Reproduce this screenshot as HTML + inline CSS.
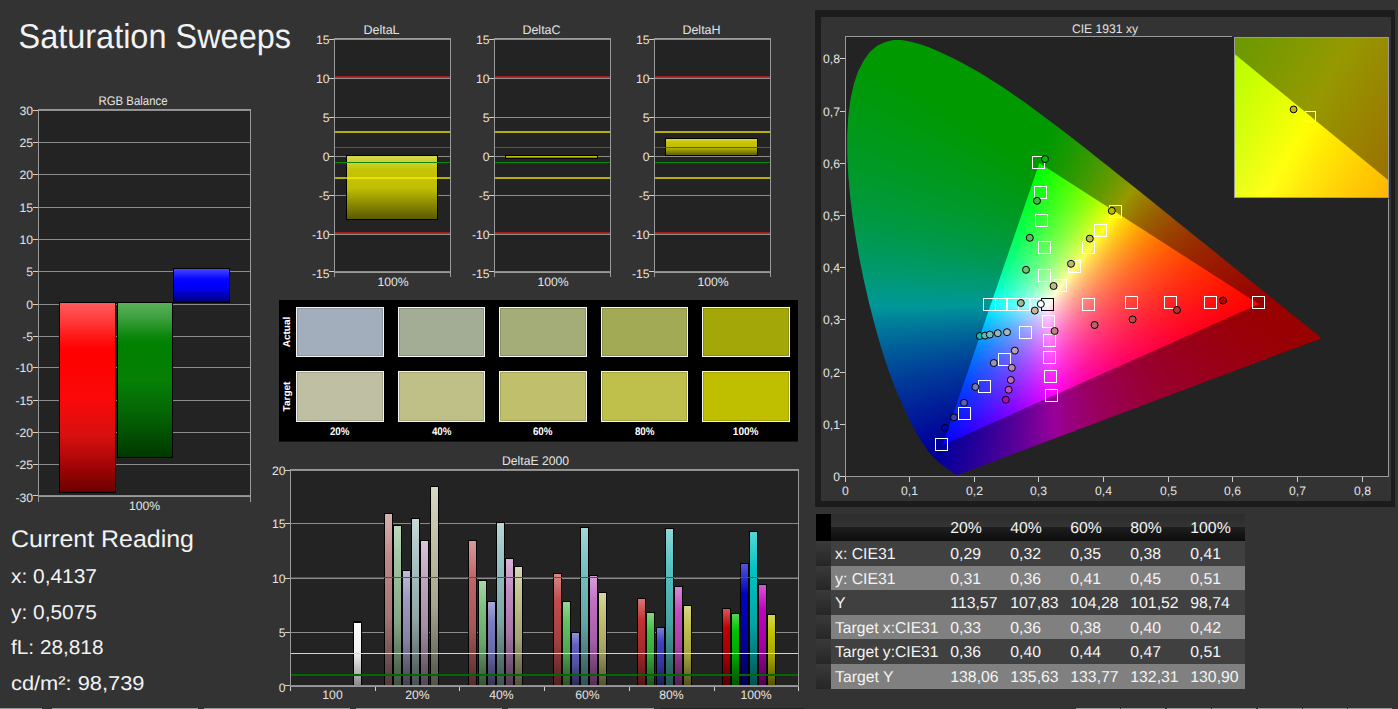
<!DOCTYPE html>
<html><head><meta charset="utf-8"><title>Saturation Sweeps</title>
<style>
html,body{margin:0;padding:0;background:#333333;}
#pg{position:relative;width:1398px;height:709px;overflow:hidden;background:#333333;font-family:"Liberation Sans", sans-serif;}
#pg svg{position:absolute;left:0;top:0;}
text{font-family:"Liberation Sans", sans-serif;}
</style></head><body><div id="pg">
<svg width="1398" height="709" viewBox="0 0 1398 709" shape-rendering="crispEdges" text-rendering="geometricPrecision"><defs><linearGradient id="gr" x1="0" y1="0" x2="0" y2="1"><stop offset="0" stop-color="#ff5c5c"/><stop offset=".08" stop-color="#ff4040"/><stop offset=".2" stop-color="#ff1010"/><stop offset=".25" stop-color="#ff0000"/><stop offset=".5" stop-color="#fb0808"/><stop offset=".7" stop-color="#d81010"/><stop offset=".87" stop-color="#a00404"/><stop offset="1" stop-color="#6a0000"/></linearGradient>
<linearGradient id="gg" x1="0" y1="0" x2="0" y2="1"><stop offset="0" stop-color="#5cb05c"/><stop offset=".1" stop-color="#3ca03c"/><stop offset=".22" stop-color="#0c860c"/><stop offset=".27" stop-color="#008000"/><stop offset=".5" stop-color="#068006"/><stop offset=".75" stop-color="#046004"/><stop offset="1" stop-color="#003800"/></linearGradient>
<linearGradient id="gb" x1="0" y1="0" x2="0" y2="1"><stop offset="0" stop-color="#4a4aff"/><stop offset=".3" stop-color="#0808ff"/><stop offset=".42" stop-color="#0000ff"/><stop offset=".6" stop-color="#0000ee"/><stop offset="1" stop-color="#000074"/></linearGradient>
<linearGradient id="gy" x1="0" y1="0" x2="0" y2="1"><stop offset="0" stop-color="#d8d850"/><stop offset=".1" stop-color="#d0d030"/><stop offset=".22" stop-color="#c5c506"/><stop offset=".5" stop-color="#c0c000"/><stop offset="1" stop-color="#585800"/></linearGradient>
<linearGradient id="bw" x1="0" y1="0" x2="0" y2="1"><stop offset="0" stop-color="#ffffff"/><stop offset=".5" stop-color="#f0f0f0"/><stop offset="1" stop-color="#8a8a8a"/></linearGradient>
<linearGradient id="b00" x1="0" y1="0" x2="0" y2="1"><stop offset="0" stop-color="#d7b2b2"/><stop offset=".25" stop-color="#c28888"/><stop offset=".6" stop-color="#a57474"/><stop offset="1" stop-color="#513939"/></linearGradient>
<linearGradient id="b01" x1="0" y1="0" x2="0" y2="1"><stop offset="0" stop-color="#bed7be"/><stop offset=".25" stop-color="#9bc29b"/><stop offset=".6" stop-color="#84a584"/><stop offset="1" stop-color="#415141"/></linearGradient>
<linearGradient id="b02" x1="0" y1="0" x2="0" y2="1"><stop offset="0" stop-color="#bebed7"/><stop offset=".25" stop-color="#9b9bc2"/><stop offset=".6" stop-color="#8484a5"/><stop offset="1" stop-color="#414151"/></linearGradient>
<linearGradient id="b03" x1="0" y1="0" x2="0" y2="1"><stop offset="0" stop-color="#c8d7d7"/><stop offset=".25" stop-color="#abc2c2"/><stop offset=".6" stop-color="#91a5a5"/><stop offset="1" stop-color="#485151"/></linearGradient>
<linearGradient id="b04" x1="0" y1="0" x2="0" y2="1"><stop offset="0" stop-color="#d7c5d7"/><stop offset=".25" stop-color="#c2a6c2"/><stop offset=".6" stop-color="#a58da5"/><stop offset="1" stop-color="#514651"/></linearGradient>
<linearGradient id="b05" x1="0" y1="0" x2="0" y2="1"><stop offset="0" stop-color="#d7d7c5"/><stop offset=".25" stop-color="#c2c2a6"/><stop offset=".6" stop-color="#a5a58d"/><stop offset="1" stop-color="#515146"/></linearGradient>
<linearGradient id="b10" x1="0" y1="0" x2="0" y2="1"><stop offset="0" stop-color="#d79c9c"/><stop offset=".25" stop-color="#c26666"/><stop offset=".6" stop-color="#a55757"/><stop offset="1" stop-color="#512b2b"/></linearGradient>
<linearGradient id="b11" x1="0" y1="0" x2="0" y2="1"><stop offset="0" stop-color="#aad7aa"/><stop offset=".25" stop-color="#7cc27c"/><stop offset=".6" stop-color="#69a569"/><stop offset="1" stop-color="#345134"/></linearGradient>
<linearGradient id="b12" x1="0" y1="0" x2="0" y2="1"><stop offset="0" stop-color="#aaaad7"/><stop offset=".25" stop-color="#7c7cc2"/><stop offset=".6" stop-color="#6969a5"/><stop offset="1" stop-color="#343451"/></linearGradient>
<linearGradient id="b13" x1="0" y1="0" x2="0" y2="1"><stop offset="0" stop-color="#b9d7d7"/><stop offset=".25" stop-color="#93c2c2"/><stop offset=".6" stop-color="#7da5a5"/><stop offset="1" stop-color="#3e5151"/></linearGradient>
<linearGradient id="b14" x1="0" y1="0" x2="0" y2="1"><stop offset="0" stop-color="#d7b4d7"/><stop offset=".25" stop-color="#c28bc2"/><stop offset=".6" stop-color="#a576a5"/><stop offset="1" stop-color="#513a51"/></linearGradient>
<linearGradient id="b15" x1="0" y1="0" x2="0" y2="1"><stop offset="0" stop-color="#d7d7b3"/><stop offset=".25" stop-color="#c2c28a"/><stop offset=".6" stop-color="#a5a575"/><stop offset="1" stop-color="#51513a"/></linearGradient>
<linearGradient id="b20" x1="0" y1="0" x2="0" y2="1"><stop offset="0" stop-color="#d78a8a"/><stop offset=".25" stop-color="#c24b4b"/><stop offset=".6" stop-color="#a54040"/><stop offset="1" stop-color="#512020"/></linearGradient>
<linearGradient id="b21" x1="0" y1="0" x2="0" y2="1"><stop offset="0" stop-color="#97d797"/><stop offset=".25" stop-color="#5fc25f"/><stop offset=".6" stop-color="#51a551"/><stop offset="1" stop-color="#285128"/></linearGradient>
<linearGradient id="b22" x1="0" y1="0" x2="0" y2="1"><stop offset="0" stop-color="#9797d7"/><stop offset=".25" stop-color="#5f5fc2"/><stop offset=".6" stop-color="#5151a5"/><stop offset="1" stop-color="#282851"/></linearGradient>
<linearGradient id="b23" x1="0" y1="0" x2="0" y2="1"><stop offset="0" stop-color="#a7d7d7"/><stop offset=".25" stop-color="#77c2c2"/><stop offset=".6" stop-color="#65a5a5"/><stop offset="1" stop-color="#325151"/></linearGradient>
<linearGradient id="b24" x1="0" y1="0" x2="0" y2="1"><stop offset="0" stop-color="#d7a1d7"/><stop offset=".25" stop-color="#c26ec2"/><stop offset=".6" stop-color="#a55ea5"/><stop offset="1" stop-color="#512e51"/></linearGradient>
<linearGradient id="b25" x1="0" y1="0" x2="0" y2="1"><stop offset="0" stop-color="#d7d7a1"/><stop offset=".25" stop-color="#c2c26e"/><stop offset=".6" stop-color="#a5a55e"/><stop offset="1" stop-color="#51512e"/></linearGradient>
<linearGradient id="b30" x1="0" y1="0" x2="0" y2="1"><stop offset="0" stop-color="#d77a7a"/><stop offset=".25" stop-color="#c23232"/><stop offset=".6" stop-color="#a52a2a"/><stop offset="1" stop-color="#511515"/></linearGradient>
<linearGradient id="b31" x1="0" y1="0" x2="0" y2="1"><stop offset="0" stop-color="#84d784"/><stop offset=".25" stop-color="#41c241"/><stop offset=".6" stop-color="#37a537"/><stop offset="1" stop-color="#1b511b"/></linearGradient>
<linearGradient id="b32" x1="0" y1="0" x2="0" y2="1"><stop offset="0" stop-color="#8484d7"/><stop offset=".25" stop-color="#4141c2"/><stop offset=".6" stop-color="#3737a5"/><stop offset="1" stop-color="#1b1b51"/></linearGradient>
<linearGradient id="b33" x1="0" y1="0" x2="0" y2="1"><stop offset="0" stop-color="#90d7d7"/><stop offset=".25" stop-color="#55c2c2"/><stop offset=".6" stop-color="#48a5a5"/><stop offset="1" stop-color="#245151"/></linearGradient>
<linearGradient id="b34" x1="0" y1="0" x2="0" y2="1"><stop offset="0" stop-color="#d78bd7"/><stop offset=".25" stop-color="#c24dc2"/><stop offset=".6" stop-color="#a541a5"/><stop offset="1" stop-color="#512051"/></linearGradient>
<linearGradient id="b35" x1="0" y1="0" x2="0" y2="1"><stop offset="0" stop-color="#d7d78b"/><stop offset=".25" stop-color="#c2c24d"/><stop offset=".6" stop-color="#a5a541"/><stop offset="1" stop-color="#515120"/></linearGradient>
<linearGradient id="b40" x1="0" y1="0" x2="0" y2="1"><stop offset="0" stop-color="#d75959"/><stop offset=".25" stop-color="#c20000"/><stop offset=".6" stop-color="#a50000"/><stop offset="1" stop-color="#510000"/></linearGradient>
<linearGradient id="b41" x1="0" y1="0" x2="0" y2="1"><stop offset="0" stop-color="#59d759"/><stop offset=".25" stop-color="#00c200"/><stop offset=".6" stop-color="#00a500"/><stop offset="1" stop-color="#005100"/></linearGradient>
<linearGradient id="b42" x1="0" y1="0" x2="0" y2="1"><stop offset="0" stop-color="#5959d7"/><stop offset=".25" stop-color="#0000c2"/><stop offset=".6" stop-color="#0000a5"/><stop offset="1" stop-color="#000051"/></linearGradient>
<linearGradient id="b43" x1="0" y1="0" x2="0" y2="1"><stop offset="0" stop-color="#59d7d7"/><stop offset=".25" stop-color="#00c2c2"/><stop offset=".6" stop-color="#00a5a5"/><stop offset="1" stop-color="#005151"/></linearGradient>
<linearGradient id="b44" x1="0" y1="0" x2="0" y2="1"><stop offset="0" stop-color="#d759d7"/><stop offset=".25" stop-color="#c200c2"/><stop offset=".6" stop-color="#a500a5"/><stop offset="1" stop-color="#510051"/></linearGradient>
<linearGradient id="b45" x1="0" y1="0" x2="0" y2="1"><stop offset="0" stop-color="#d7d759"/><stop offset=".25" stop-color="#c2c200"/><stop offset=".6" stop-color="#a5a500"/><stop offset="1" stop-color="#515100"/></linearGradient>
<linearGradient id="th" x1="0" y1="0" x2="0" y2="1"><stop offset="0" stop-color="#2c2c2c"/><stop offset=".5" stop-color="#343434"/><stop offset=".5" stop-color="#1e1e1e"/><stop offset="1" stop-color="#0c0c0c"/></linearGradient>
<linearGradient id="rh" x1="0" y1="0" x2="0" y2="1"><stop offset="0" stop-color="#3a3a3a"/><stop offset="1" stop-color="#262626"/></linearGradient></defs>
<text x="18.5" y="48.2" font-size="34.5" fill="#f2f2f2" textLength="272.5" lengthAdjust="spacingAndGlyphs">Saturation Sweeps</text>
<rect x="38" y="109" width="213" height="388" fill="#232323"/>
<rect x="38" y="110" width="212" height="1" fill="#8c8c8c"/>
<rect x="33" y="110" width="5" height="1" fill="#d0d0d0"/>
<text x="33" y="115.4" font-size="12.2" fill="#e4e4e4" text-anchor="end">30</text>
<rect x="38" y="142" width="212" height="1" fill="#8c8c8c"/>
<rect x="33" y="142" width="5" height="1" fill="#d0d0d0"/>
<text x="33" y="147.4" font-size="12.2" fill="#e4e4e4" text-anchor="end">25</text>
<rect x="38" y="174" width="212" height="1" fill="#8c8c8c"/>
<rect x="33" y="174" width="5" height="1" fill="#d0d0d0"/>
<text x="33" y="179.4" font-size="12.2" fill="#e4e4e4" text-anchor="end">20</text>
<rect x="38" y="207" width="212" height="1" fill="#8c8c8c"/>
<rect x="33" y="207" width="5" height="1" fill="#d0d0d0"/>
<text x="33" y="212.4" font-size="12.2" fill="#e4e4e4" text-anchor="end">15</text>
<rect x="38" y="239" width="212" height="1" fill="#8c8c8c"/>
<rect x="33" y="239" width="5" height="1" fill="#d0d0d0"/>
<text x="33" y="244.4" font-size="12.2" fill="#e4e4e4" text-anchor="end">10</text>
<rect x="38" y="271" width="212" height="1" fill="#8c8c8c"/>
<rect x="33" y="271" width="5" height="1" fill="#d0d0d0"/>
<text x="33" y="276.4" font-size="12.2" fill="#e4e4e4" text-anchor="end">5</text>
<rect x="38" y="304" width="212" height="1" fill="#8c8c8c"/>
<rect x="33" y="304" width="5" height="1" fill="#d0d0d0"/>
<text x="33" y="309.4" font-size="12.2" fill="#e4e4e4" text-anchor="end">0</text>
<rect x="38" y="336" width="212" height="1" fill="#8c8c8c"/>
<rect x="33" y="336" width="5" height="1" fill="#d0d0d0"/>
<text x="33" y="341.4" font-size="12.2" fill="#e4e4e4" text-anchor="end">-5</text>
<rect x="38" y="367" width="212" height="1" fill="#8c8c8c"/>
<rect x="33" y="367" width="5" height="1" fill="#d0d0d0"/>
<text x="33" y="372.4" font-size="12.2" fill="#e4e4e4" text-anchor="end">-10</text>
<rect x="38" y="400" width="212" height="1" fill="#8c8c8c"/>
<rect x="33" y="400" width="5" height="1" fill="#d0d0d0"/>
<text x="33" y="405.4" font-size="12.2" fill="#e4e4e4" text-anchor="end">-15</text>
<rect x="38" y="432" width="212" height="1" fill="#8c8c8c"/>
<rect x="33" y="432" width="5" height="1" fill="#d0d0d0"/>
<text x="33" y="437.4" font-size="12.2" fill="#e4e4e4" text-anchor="end">-20</text>
<rect x="38" y="464" width="212" height="1" fill="#8c8c8c"/>
<rect x="33" y="464" width="5" height="1" fill="#d0d0d0"/>
<text x="33" y="469.4" font-size="12.2" fill="#e4e4e4" text-anchor="end">-25</text>
<rect x="38" y="495" width="212" height="1" fill="#8c8c8c"/>
<rect x="33" y="495" width="5" height="1" fill="#d0d0d0"/>
<text x="33" y="502" font-size="12.2" fill="#e4e4e4" text-anchor="end">-30</text>
<rect x="38" y="109" width="213" height="1" fill="#9a9a9a"/>
<rect x="38" y="109" width="1" height="393" fill="#9a9a9a"/>
<rect x="250" y="109" width="1" height="393" fill="#9a9a9a"/>
<rect x="38" y="496" width="213" height="1" fill="#9a9a9a"/>
<text x="133" y="105" font-size="12.5" fill="#e4e4e4" text-anchor="middle" textLength="69" lengthAdjust="spacingAndGlyphs">RGB Balance</text>
<text x="144.5" y="510" font-size="12.2" fill="#e4e4e4" text-anchor="middle">100%</text>
<rect x="59.6" y="302.5" width="55.5" height="190" fill="url(#gr)" stroke="#000" stroke-width="1"/>
<rect x="117" y="302.5" width="55" height="155" fill="url(#gg)" stroke="#000" stroke-width="1"/>
<rect x="173.7" y="268.5" width="55.5" height="34" fill="url(#gb)" stroke="#000" stroke-width="1"/>
<text x="11" y="546.5" font-size="24" fill="#f2f2f2" textLength="183" lengthAdjust="spacingAndGlyphs">Current Reading</text>
<text x="11" y="583" font-size="20" fill="#f2f2f2" textLength="86" lengthAdjust="spacingAndGlyphs">x: 0,4137</text>
<text x="11" y="618.5" font-size="20" fill="#f2f2f2" textLength="86" lengthAdjust="spacingAndGlyphs">y: 0,5075</text>
<text x="11" y="653.7" font-size="20" fill="#f2f2f2" textLength="92.5" lengthAdjust="spacingAndGlyphs">fL: 28,818</text>
<text x="11" y="689.6" font-size="20" fill="#f2f2f2" textLength="133.5" lengthAdjust="spacingAndGlyphs">cd/m²: 98,739</text>
<rect x="334" y="39" width="117" height="233" fill="#232323"/>
<rect x="334" y="39" width="116" height="1" fill="#8c8c8c"/>
<rect x="329" y="39" width="5" height="1" fill="#d0d0d0"/>
<text x="329.5" y="44" font-size="12.2" fill="#e4e4e4" text-anchor="end">15</text>
<rect x="334" y="78" width="116" height="1" fill="#8c8c8c"/>
<rect x="329" y="78" width="5" height="1" fill="#d0d0d0"/>
<text x="329.5" y="83" font-size="12.2" fill="#e4e4e4" text-anchor="end">10</text>
<rect x="334" y="117" width="116" height="1" fill="#8c8c8c"/>
<rect x="329" y="117" width="5" height="1" fill="#d0d0d0"/>
<text x="329.5" y="122" font-size="12.2" fill="#e4e4e4" text-anchor="end">5</text>
<rect x="334" y="156" width="116" height="1" fill="#8c8c8c"/>
<rect x="329" y="156" width="5" height="1" fill="#d0d0d0"/>
<text x="329.5" y="161" font-size="12.2" fill="#e4e4e4" text-anchor="end">0</text>
<rect x="334" y="195" width="116" height="1" fill="#8c8c8c"/>
<rect x="329" y="195" width="5" height="1" fill="#d0d0d0"/>
<text x="329.5" y="200" font-size="12.2" fill="#e4e4e4" text-anchor="end">-5</text>
<rect x="334" y="234" width="116" height="1" fill="#8c8c8c"/>
<rect x="329" y="234" width="5" height="1" fill="#d0d0d0"/>
<text x="329.5" y="239" font-size="12.2" fill="#e4e4e4" text-anchor="end">-10</text>
<rect x="334" y="271" width="116" height="1" fill="#8c8c8c"/>
<rect x="329" y="271" width="5" height="1" fill="#d0d0d0"/>
<text x="329.5" y="278" font-size="12.2" fill="#e4e4e4" text-anchor="end">-15</text>
<rect x="334" y="38" width="117" height="1" fill="#9a9a9a"/>
<rect x="334" y="38" width="1" height="239" fill="#9a9a9a"/>
<rect x="450" y="38" width="1" height="239" fill="#9a9a9a"/>
<rect x="334" y="272" width="117" height="1" fill="#9a9a9a"/>
<rect x="346.5" y="155.5" width="91" height="64" fill="url(#gy)" stroke="#000" stroke-width="1"/>
<rect x="335" y="76.3" width="115" height="1.7" fill="#d81c1c" shape-rendering="auto"/>
<rect x="335" y="232.3" width="115" height="1.7" fill="#d81c1c" shape-rendering="auto"/>
<rect x="335" y="131" width="115" height="2" fill="#fff000" opacity=".67"/>
<rect x="335" y="177" width="115" height="2" fill="#fff000" opacity=".67"/>
<rect x="335" y="147" width="115" height="1" fill="#0a8c0a"/>
<rect x="335" y="162" width="115" height="1" fill="#0a8c0a"/>
<text x="381.5" y="33.8" font-size="12.5" fill="#e4e4e4" text-anchor="middle">DeltaL</text>
<text x="393" y="286" font-size="12.2" fill="#e4e4e4" text-anchor="middle">100%</text>
<rect x="494" y="39" width="117" height="233" fill="#232323"/>
<rect x="494" y="39" width="116" height="1" fill="#8c8c8c"/>
<rect x="489" y="39" width="5" height="1" fill="#d0d0d0"/>
<text x="489.5" y="44" font-size="12.2" fill="#e4e4e4" text-anchor="end">15</text>
<rect x="494" y="78" width="116" height="1" fill="#8c8c8c"/>
<rect x="489" y="78" width="5" height="1" fill="#d0d0d0"/>
<text x="489.5" y="83" font-size="12.2" fill="#e4e4e4" text-anchor="end">10</text>
<rect x="494" y="117" width="116" height="1" fill="#8c8c8c"/>
<rect x="489" y="117" width="5" height="1" fill="#d0d0d0"/>
<text x="489.5" y="122" font-size="12.2" fill="#e4e4e4" text-anchor="end">5</text>
<rect x="494" y="156" width="116" height="1" fill="#8c8c8c"/>
<rect x="489" y="156" width="5" height="1" fill="#d0d0d0"/>
<text x="489.5" y="161" font-size="12.2" fill="#e4e4e4" text-anchor="end">0</text>
<rect x="494" y="195" width="116" height="1" fill="#8c8c8c"/>
<rect x="489" y="195" width="5" height="1" fill="#d0d0d0"/>
<text x="489.5" y="200" font-size="12.2" fill="#e4e4e4" text-anchor="end">-5</text>
<rect x="494" y="234" width="116" height="1" fill="#8c8c8c"/>
<rect x="489" y="234" width="5" height="1" fill="#d0d0d0"/>
<text x="489.5" y="239" font-size="12.2" fill="#e4e4e4" text-anchor="end">-10</text>
<rect x="494" y="271" width="116" height="1" fill="#8c8c8c"/>
<rect x="489" y="271" width="5" height="1" fill="#d0d0d0"/>
<text x="489.5" y="278" font-size="12.2" fill="#e4e4e4" text-anchor="end">-15</text>
<rect x="494" y="38" width="117" height="1" fill="#9a9a9a"/>
<rect x="494" y="38" width="1" height="239" fill="#9a9a9a"/>
<rect x="610" y="38" width="1" height="239" fill="#9a9a9a"/>
<rect x="494" y="272" width="117" height="1" fill="#9a9a9a"/>
<rect x="505.5" y="155.5" width="92" height="2.5" fill="url(#gy)" stroke="#000" stroke-width="1"/>
<rect x="495" y="76.3" width="115" height="1.7" fill="#d81c1c" shape-rendering="auto"/>
<rect x="495" y="232.3" width="115" height="1.7" fill="#d81c1c" shape-rendering="auto"/>
<rect x="495" y="131" width="115" height="2" fill="#fff000" opacity=".67"/>
<rect x="495" y="177" width="115" height="2" fill="#fff000" opacity=".67"/>
<rect x="495" y="147" width="115" height="1" fill="#0a8c0a"/>
<rect x="495" y="162" width="115" height="1" fill="#0a8c0a"/>
<text x="541.5" y="33.8" font-size="12.5" fill="#e4e4e4" text-anchor="middle">DeltaC</text>
<text x="553" y="286" font-size="12.2" fill="#e4e4e4" text-anchor="middle">100%</text>
<rect x="654" y="39" width="117" height="233" fill="#232323"/>
<rect x="654" y="39" width="116" height="1" fill="#8c8c8c"/>
<rect x="649" y="39" width="5" height="1" fill="#d0d0d0"/>
<text x="649.5" y="44" font-size="12.2" fill="#e4e4e4" text-anchor="end">15</text>
<rect x="654" y="78" width="116" height="1" fill="#8c8c8c"/>
<rect x="649" y="78" width="5" height="1" fill="#d0d0d0"/>
<text x="649.5" y="83" font-size="12.2" fill="#e4e4e4" text-anchor="end">10</text>
<rect x="654" y="117" width="116" height="1" fill="#8c8c8c"/>
<rect x="649" y="117" width="5" height="1" fill="#d0d0d0"/>
<text x="649.5" y="122" font-size="12.2" fill="#e4e4e4" text-anchor="end">5</text>
<rect x="654" y="156" width="116" height="1" fill="#8c8c8c"/>
<rect x="649" y="156" width="5" height="1" fill="#d0d0d0"/>
<text x="649.5" y="161" font-size="12.2" fill="#e4e4e4" text-anchor="end">0</text>
<rect x="654" y="195" width="116" height="1" fill="#8c8c8c"/>
<rect x="649" y="195" width="5" height="1" fill="#d0d0d0"/>
<text x="649.5" y="200" font-size="12.2" fill="#e4e4e4" text-anchor="end">-5</text>
<rect x="654" y="234" width="116" height="1" fill="#8c8c8c"/>
<rect x="649" y="234" width="5" height="1" fill="#d0d0d0"/>
<text x="649.5" y="239" font-size="12.2" fill="#e4e4e4" text-anchor="end">-10</text>
<rect x="654" y="271" width="116" height="1" fill="#8c8c8c"/>
<rect x="649" y="271" width="5" height="1" fill="#d0d0d0"/>
<text x="649.5" y="278" font-size="12.2" fill="#e4e4e4" text-anchor="end">-15</text>
<rect x="654" y="38" width="117" height="1" fill="#9a9a9a"/>
<rect x="654" y="38" width="1" height="239" fill="#9a9a9a"/>
<rect x="770" y="38" width="1" height="239" fill="#9a9a9a"/>
<rect x="654" y="272" width="117" height="1" fill="#9a9a9a"/>
<rect x="665.5" y="138.5" width="92" height="17" fill="url(#gy)" stroke="#000" stroke-width="1"/>
<rect x="655" y="76.3" width="115" height="1.7" fill="#d81c1c" shape-rendering="auto"/>
<rect x="655" y="232.3" width="115" height="1.7" fill="#d81c1c" shape-rendering="auto"/>
<rect x="655" y="131" width="115" height="2" fill="#fff000" opacity=".67"/>
<rect x="655" y="177" width="115" height="2" fill="#fff000" opacity=".67"/>
<rect x="655" y="147" width="115" height="1" fill="#0a8c0a"/>
<rect x="655" y="162" width="115" height="1" fill="#0a8c0a"/>
<text x="701.5" y="33.8" font-size="12.5" fill="#e4e4e4" text-anchor="middle">DeltaH</text>
<text x="713" y="286" font-size="12.2" fill="#e4e4e4" text-anchor="middle">100%</text>
<rect x="279" y="300" width="519" height="141.6" fill="#000" shape-rendering="auto"/>
<rect x="296.5" y="307.5" width="87" height="49" fill="#a2aebb" stroke="#f4f4f4" stroke-width="1"/>
<rect x="296.5" y="371.5" width="87" height="50" fill="#bfbfa3" stroke="#f4f4f4" stroke-width="1"/>
<rect x="297.5" y="308.5" width="85" height="47" fill="none" stroke="#000" stroke-opacity=".13" stroke-width="1"/>
<rect x="297.5" y="372.5" width="85" height="48" fill="none" stroke="#000" stroke-opacity=".13" stroke-width="1"/>
<text x="339.7" y="434.9" font-size="11" fill="#fff" text-anchor="middle" font-weight="bold" textLength="19.6" lengthAdjust="spacingAndGlyphs">20%</text>
<rect x="398.5" y="307.5" width="86" height="49" fill="#a3ad96" stroke="#f4f4f4" stroke-width="1"/>
<rect x="398.5" y="371.5" width="86" height="50" fill="#bfbf88" stroke="#f4f4f4" stroke-width="1"/>
<rect x="399.5" y="308.5" width="84" height="47" fill="none" stroke="#000" stroke-opacity=".13" stroke-width="1"/>
<rect x="399.5" y="372.5" width="84" height="48" fill="none" stroke="#000" stroke-opacity=".13" stroke-width="1"/>
<text x="441.7" y="434.9" font-size="11" fill="#fff" text-anchor="middle" font-weight="bold" textLength="19.6" lengthAdjust="spacingAndGlyphs">40%</text>
<rect x="499.5" y="307.5" width="87" height="49" fill="#a4ac78" stroke="#f4f4f4" stroke-width="1"/>
<rect x="499.5" y="371.5" width="87" height="50" fill="#bfbf6c" stroke="#f4f4f4" stroke-width="1"/>
<rect x="500.5" y="308.5" width="85" height="47" fill="none" stroke="#000" stroke-opacity=".13" stroke-width="1"/>
<rect x="500.5" y="372.5" width="85" height="48" fill="none" stroke="#000" stroke-opacity=".13" stroke-width="1"/>
<text x="542.7" y="434.9" font-size="11" fill="#fff" text-anchor="middle" font-weight="bold" textLength="19.6" lengthAdjust="spacingAndGlyphs">60%</text>
<rect x="601.5" y="307.5" width="86" height="49" fill="#a3aa55" stroke="#f4f4f4" stroke-width="1"/>
<rect x="601.5" y="371.5" width="86" height="50" fill="#bfbf4c" stroke="#f4f4f4" stroke-width="1"/>
<rect x="602.5" y="308.5" width="84" height="47" fill="none" stroke="#000" stroke-opacity=".13" stroke-width="1"/>
<rect x="602.5" y="372.5" width="84" height="48" fill="none" stroke="#000" stroke-opacity=".13" stroke-width="1"/>
<text x="644.7" y="434.9" font-size="11" fill="#fff" text-anchor="middle" font-weight="bold" textLength="19.6" lengthAdjust="spacingAndGlyphs">80%</text>
<rect x="702.5" y="307.5" width="87" height="49" fill="#a3a808" stroke="#f4f4f4" stroke-width="1"/>
<rect x="702.5" y="371.5" width="87" height="50" fill="#bfbf00" stroke="#f4f4f4" stroke-width="1"/>
<rect x="703.5" y="308.5" width="85" height="47" fill="none" stroke="#000" stroke-opacity=".13" stroke-width="1"/>
<rect x="703.5" y="372.5" width="85" height="48" fill="none" stroke="#000" stroke-opacity=".13" stroke-width="1"/>
<text x="745.7" y="434.9" font-size="11" fill="#fff" text-anchor="middle" font-weight="bold" textLength="25.8" lengthAdjust="spacingAndGlyphs">100%</text>
<text transform="translate(289.7,332) rotate(-90)" font-size="10" font-weight="bold" fill="#fff" text-anchor="middle">Actual</text>
<text transform="translate(289.7,396.5) rotate(-90)" font-size="10" font-weight="bold" fill="#fff" text-anchor="middle">Target</text>
<rect x="290" y="470" width="509" height="216" fill="#232323"/>
<rect x="290" y="470" width="508" height="1" fill="#8c8c8c"/>
<rect x="285" y="470" width="5" height="1" fill="#d0d0d0"/>
<text x="285.5" y="475.2" font-size="12.2" fill="#e4e4e4" text-anchor="end">20</text>
<rect x="290" y="523" width="508" height="1" fill="#8c8c8c"/>
<rect x="285" y="523" width="5" height="1" fill="#d0d0d0"/>
<text x="285.5" y="528.2" font-size="12.2" fill="#e4e4e4" text-anchor="end">15</text>
<rect x="290" y="578" width="508" height="1" fill="#8c8c8c"/>
<rect x="285" y="578" width="5" height="1" fill="#d0d0d0"/>
<text x="285.5" y="583.2" font-size="12.2" fill="#e4e4e4" text-anchor="end">10</text>
<rect x="290" y="632" width="508" height="1" fill="#8c8c8c"/>
<rect x="285" y="632" width="5" height="1" fill="#d0d0d0"/>
<text x="285.5" y="637.2" font-size="12.2" fill="#e4e4e4" text-anchor="end">5</text>
<rect x="290" y="685" width="508" height="1" fill="#8c8c8c"/>
<rect x="285" y="685" width="5" height="1" fill="#d0d0d0"/>
<text x="285.5" y="691.6" font-size="12.2" fill="#e4e4e4" text-anchor="end">0</text>
<rect x="290" y="469" width="509" height="1" fill="#9a9a9a"/>
<rect x="290" y="469" width="1" height="217" fill="#9a9a9a"/>
<rect x="798" y="469" width="1" height="217" fill="#9a9a9a"/>
<rect x="290" y="686" width="509" height="1" fill="#9a9a9a"/>
<rect x="290" y="685" width="1" height="6" fill="#d0d0d0"/>
<rect x="375" y="685" width="1" height="6" fill="#d0d0d0"/>
<rect x="459" y="685" width="1" height="6" fill="#d0d0d0"/>
<rect x="544" y="685" width="1" height="6" fill="#d0d0d0"/>
<rect x="629" y="685" width="1" height="6" fill="#d0d0d0"/>
<rect x="714" y="685" width="1" height="6" fill="#d0d0d0"/>
<rect x="798" y="685" width="1" height="6" fill="#d0d0d0"/>
<text x="332.5" y="698.5" font-size="12.2" fill="#e4e4e4" text-anchor="middle">100</text>
<text x="417.5" y="698.5" font-size="12.2" fill="#e4e4e4" text-anchor="middle">20%</text>
<text x="501.5" y="698.5" font-size="12.2" fill="#e4e4e4" text-anchor="middle">40%</text>
<text x="587.5" y="698.5" font-size="12.2" fill="#e4e4e4" text-anchor="middle">60%</text>
<text x="671.5" y="698.5" font-size="12.2" fill="#e4e4e4" text-anchor="middle">80%</text>
<text x="756" y="698.5" font-size="12.2" fill="#e4e4e4" text-anchor="middle">100%</text>
<text x="535.5" y="465" font-size="12.5" fill="#e4e4e4" text-anchor="middle" textLength="67" lengthAdjust="spacingAndGlyphs">DeltaE 2000</text>
<rect x="353.5" y="621.5" width="8" height="64" fill="url(#bw)" stroke="#000"/><rect x="353" y="622" width="9" height="1" fill="#000"/>
<rect x="384.5" y="513.5" width="8" height="172" fill="url(#b00)" stroke="#000"/>
<rect x="393.5" y="525.5" width="8" height="160" fill="url(#b01)" stroke="#000"/>
<rect x="402.5" y="570.5" width="8" height="115" fill="url(#b02)" stroke="#000"/>
<rect x="411.5" y="518.5" width="8" height="167" fill="url(#b03)" stroke="#000"/>
<rect x="420.5" y="540.5" width="8" height="145" fill="url(#b04)" stroke="#000"/>
<rect x="430.5" y="486.5" width="8" height="199" fill="url(#b05)" stroke="#000"/>
<rect x="468.5" y="540.5" width="8" height="145" fill="url(#b10)" stroke="#000"/>
<rect x="478.5" y="580.5" width="8" height="105" fill="url(#b11)" stroke="#000"/>
<rect x="487.5" y="601" width="8" height="84.5" fill="url(#b12)" stroke="#000"/>
<rect x="496.5" y="522.5" width="8" height="163" fill="url(#b13)" stroke="#000"/>
<rect x="505.5" y="558.5" width="8" height="127" fill="url(#b14)" stroke="#000"/>
<rect x="514.5" y="566.5" width="8" height="119" fill="url(#b15)" stroke="#000"/>
<rect x="553.5" y="573" width="8" height="112.5" fill="url(#b20)" stroke="#000"/>
<rect x="562.5" y="601" width="8" height="84.5" fill="url(#b21)" stroke="#000"/>
<rect x="571.5" y="632" width="8" height="53.5" fill="url(#b22)" stroke="#000"/>
<rect x="580.5" y="527.5" width="8" height="158" fill="url(#b23)" stroke="#000"/>
<rect x="589.5" y="575" width="8" height="110.5" fill="url(#b24)" stroke="#000"/>
<rect x="598.5" y="592" width="8" height="93.5" fill="url(#b25)" stroke="#000"/>
<rect x="637.5" y="598" width="8" height="87.5" fill="url(#b30)" stroke="#000"/>
<rect x="646.5" y="612" width="8" height="73.5" fill="url(#b31)" stroke="#000"/>
<rect x="656.5" y="627" width="8" height="58.5" fill="url(#b32)" stroke="#000"/>
<rect x="665.5" y="528.5" width="8" height="157" fill="url(#b33)" stroke="#000"/>
<rect x="674.5" y="586" width="8" height="99.5" fill="url(#b34)" stroke="#000"/>
<rect x="683.5" y="605" width="8" height="80.5" fill="url(#b35)" stroke="#000"/>
<rect x="722.5" y="608.5" width="8" height="77" fill="url(#b40)" stroke="#000"/>
<rect x="731.5" y="613" width="8" height="72.5" fill="url(#b41)" stroke="#000"/>
<rect x="740.5" y="563" width="8" height="122.5" fill="url(#b42)" stroke="#000"/>
<rect x="749.5" y="531.5" width="8" height="154" fill="url(#b43)" stroke="#000"/>
<rect x="758.5" y="584" width="8" height="101.5" fill="url(#b44)" stroke="#000"/>
<rect x="767.5" y="614" width="8" height="71.5" fill="url(#b45)" stroke="#000"/>
<rect x="291" y="577" width="507" height="1" fill="#e61414"/>
<rect x="291" y="653" width="507" height="1" fill="#f0f000"/>
<rect x="291" y="674" width="507" height="2" fill="#056605"/>
<rect x="290" y="685" width="509" height="1" fill="#8c8c8c"/>
<rect x="290" y="686" width="509" height="1" fill="#9a9a9a"/>
<rect x="815" y="10" width="580" height="497" fill="#1c1c1c"/>
<rect x="821" y="17" width="570" height="484" fill="#333333"/>
<rect x="846" y="37" width="542" height="440" fill="#232323"/>
<rect x="845" y="36" width="387" height="1" fill="#9a9a9a"/>
<rect x="845" y="36" width="1" height="441" fill="#9a9a9a"/>
<rect x="845" y="476" width="544" height="1" fill="#9a9a9a"/>
<rect x="1388" y="199" width="1" height="278" fill="#9a9a9a"/>
<text x="1105" y="33" font-size="12.5" fill="#e4e4e4" text-anchor="middle" textLength="66" lengthAdjust="spacingAndGlyphs">CIE 1931 xy</text>
<rect x="845" y="477" width="1" height="5" fill="#d0d0d0"/>
<text x="845.5" y="494.6" font-size="12.2" fill="#e4e4e4" text-anchor="middle">0</text>
<rect x="840" y="476" width="5" height="1" fill="#d0d0d0"/>
<text x="840" y="481.2" font-size="12.2" fill="#e4e4e4" text-anchor="end">0</text>
<rect x="909" y="477" width="1" height="5" fill="#d0d0d0"/>
<text x="909.5" y="494.6" font-size="12.2" fill="#e4e4e4" text-anchor="middle">0,1</text>
<rect x="840" y="424" width="5" height="1" fill="#d0d0d0"/>
<text x="840" y="429.2" font-size="12.2" fill="#e4e4e4" text-anchor="end">0,1</text>
<rect x="974" y="477" width="1" height="5" fill="#d0d0d0"/>
<text x="974.5" y="494.6" font-size="12.2" fill="#e4e4e4" text-anchor="middle">0,2</text>
<rect x="840" y="372" width="5" height="1" fill="#d0d0d0"/>
<text x="840" y="377.2" font-size="12.2" fill="#e4e4e4" text-anchor="end">0,2</text>
<rect x="1038" y="477" width="1" height="5" fill="#d0d0d0"/>
<text x="1038.5" y="494.6" font-size="12.2" fill="#e4e4e4" text-anchor="middle">0,3</text>
<rect x="840" y="319" width="5" height="1" fill="#d0d0d0"/>
<text x="840" y="324.2" font-size="12.2" fill="#e4e4e4" text-anchor="end">0,3</text>
<rect x="1103" y="477" width="1" height="5" fill="#d0d0d0"/>
<text x="1103.5" y="494.6" font-size="12.2" fill="#e4e4e4" text-anchor="middle">0,4</text>
<rect x="840" y="267" width="5" height="1" fill="#d0d0d0"/>
<text x="840" y="272.2" font-size="12.2" fill="#e4e4e4" text-anchor="end">0,4</text>
<rect x="1168" y="477" width="1" height="5" fill="#d0d0d0"/>
<text x="1168.5" y="494.6" font-size="12.2" fill="#e4e4e4" text-anchor="middle">0,5</text>
<rect x="840" y="215" width="5" height="1" fill="#d0d0d0"/>
<text x="840" y="220.2" font-size="12.2" fill="#e4e4e4" text-anchor="end">0,5</text>
<rect x="1232" y="477" width="1" height="5" fill="#d0d0d0"/>
<text x="1232.5" y="494.6" font-size="12.2" fill="#e4e4e4" text-anchor="middle">0,6</text>
<rect x="840" y="163" width="5" height="1" fill="#d0d0d0"/>
<text x="840" y="168.2" font-size="12.2" fill="#e4e4e4" text-anchor="end">0,6</text>
<rect x="1297" y="477" width="1" height="5" fill="#d0d0d0"/>
<text x="1297.5" y="494.6" font-size="12.2" fill="#e4e4e4" text-anchor="middle">0,7</text>
<rect x="840" y="111" width="5" height="1" fill="#d0d0d0"/>
<text x="840" y="116.2" font-size="12.2" fill="#e4e4e4" text-anchor="end">0,7</text>
<rect x="1362" y="477" width="1" height="5" fill="#d0d0d0"/>
<text x="1362.5" y="494.6" font-size="12.2" fill="#e4e4e4" text-anchor="middle">0,8</text>
<rect x="840" y="58" width="5" height="1" fill="#d0d0d0"/>
<text x="840" y="63.2" font-size="12.2" fill="#e4e4e4" text-anchor="end">0,8</text>
<rect x="816" y="514" width="429" height="27" fill="url(#th)"/>
<rect x="816" y="514" width="15" height="27" fill="#000"/>
<text x="950.3" y="532.6" font-size="15.8" fill="#f4f4f4">20%</text>
<text x="1010.3" y="532.6" font-size="15.8" fill="#f4f4f4">40%</text>
<text x="1070.3" y="532.6" font-size="15.8" fill="#f4f4f4">60%</text>
<text x="1130.3" y="532.6" font-size="15.8" fill="#f4f4f4">80%</text>
<text x="1190.3" y="532.6" font-size="15.8" fill="#f4f4f4">100%</text>
<rect x="816" y="541" width="429" height="24.5" fill="#404040"/>
<rect x="816" y="541" width="15" height="24.5" fill="url(#rh)"/>
<text x="835" y="559.3" font-size="15.8" fill="#f4f4f4">x: CIE31</text>
<text x="950.3" y="559.3" font-size="15.8" fill="#f4f4f4">0,29</text>
<text x="1010.3" y="559.3" font-size="15.8" fill="#f4f4f4">0,32</text>
<text x="1070.3" y="559.3" font-size="15.8" fill="#f4f4f4">0,35</text>
<text x="1130.3" y="559.3" font-size="15.8" fill="#f4f4f4">0,38</text>
<text x="1190.3" y="559.3" font-size="15.8" fill="#f4f4f4">0,41</text>
<rect x="816" y="565.5" width="429" height="24.5" fill="#808080"/>
<rect x="816" y="565.5" width="15" height="24.5" fill="url(#rh)"/>
<text x="835" y="583.8" font-size="15.8" fill="#f4f4f4">y: CIE31</text>
<text x="950.3" y="583.8" font-size="15.8" fill="#f4f4f4">0,31</text>
<text x="1010.3" y="583.8" font-size="15.8" fill="#f4f4f4">0,36</text>
<text x="1070.3" y="583.8" font-size="15.8" fill="#f4f4f4">0,41</text>
<text x="1130.3" y="583.8" font-size="15.8" fill="#f4f4f4">0,45</text>
<text x="1190.3" y="583.8" font-size="15.8" fill="#f4f4f4">0,51</text>
<rect x="816" y="590" width="429" height="24.5" fill="#404040"/>
<rect x="816" y="590" width="15" height="24.5" fill="url(#rh)"/>
<text x="835" y="608.3" font-size="15.8" fill="#f4f4f4">Y</text>
<text x="950.3" y="608.3" font-size="15.8" fill="#f4f4f4">113,57</text>
<text x="1010.3" y="608.3" font-size="15.8" fill="#f4f4f4">107,83</text>
<text x="1070.3" y="608.3" font-size="15.8" fill="#f4f4f4">104,28</text>
<text x="1130.3" y="608.3" font-size="15.8" fill="#f4f4f4">101,52</text>
<text x="1190.3" y="608.3" font-size="15.8" fill="#f4f4f4">98,74</text>
<rect x="816" y="614.5" width="429" height="24.5" fill="#808080"/>
<rect x="816" y="614.5" width="15" height="24.5" fill="url(#rh)"/>
<text x="835" y="632.8" font-size="15.8" fill="#f4f4f4" textLength="103.5" lengthAdjust="spacingAndGlyphs">Target x:CIE31</text>
<text x="950.3" y="632.8" font-size="15.8" fill="#f4f4f4">0,33</text>
<text x="1010.3" y="632.8" font-size="15.8" fill="#f4f4f4">0,36</text>
<text x="1070.3" y="632.8" font-size="15.8" fill="#f4f4f4">0,38</text>
<text x="1130.3" y="632.8" font-size="15.8" fill="#f4f4f4">0,40</text>
<text x="1190.3" y="632.8" font-size="15.8" fill="#f4f4f4">0,42</text>
<rect x="816" y="639" width="429" height="25" fill="#404040"/>
<rect x="816" y="639" width="15" height="25" fill="url(#rh)"/>
<text x="835" y="657.3" font-size="15.8" fill="#f4f4f4" textLength="103.5" lengthAdjust="spacingAndGlyphs">Target y:CIE31</text>
<text x="950.3" y="657.3" font-size="15.8" fill="#f4f4f4">0,36</text>
<text x="1010.3" y="657.3" font-size="15.8" fill="#f4f4f4">0,40</text>
<text x="1070.3" y="657.3" font-size="15.8" fill="#f4f4f4">0,44</text>
<text x="1130.3" y="657.3" font-size="15.8" fill="#f4f4f4">0,47</text>
<text x="1190.3" y="657.3" font-size="15.8" fill="#f4f4f4">0,51</text>
<rect x="816" y="664" width="429" height="24.5" fill="#808080"/>
<rect x="816" y="664" width="15" height="24.5" fill="url(#rh)"/>
<text x="835" y="682.3" font-size="15.8" fill="#f4f4f4">Target Y</text>
<text x="950.3" y="682.3" font-size="15.8" fill="#f4f4f4">138,06</text>
<text x="1010.3" y="682.3" font-size="15.8" fill="#f4f4f4">135,63</text>
<text x="1070.3" y="682.3" font-size="15.8" fill="#f4f4f4">133,77</text>
<text x="1130.3" y="682.3" font-size="15.8" fill="#f4f4f4">132,31</text>
<text x="1190.3" y="682.3" font-size="15.8" fill="#f4f4f4">130,90</text>
<rect x="0" y="708" width="42" height="1" fill="#9a9a9a"/>
<rect x="52" y="708" width="146" height="1" fill="#9a9a9a"/>
<rect x="204" y="708" width="146" height="1" fill="#9a9a9a"/>
<rect x="356" y="708" width="146" height="1" fill="#9a9a9a"/>
<rect x="508" y="708" width="146" height="1" fill="#9a9a9a"/>
<rect x="661" y="708" width="143" height="1" fill="#222"/>
<rect x="1076" y="708" width="44" height="1" fill="#9a9a9a"/>
<rect x="1121" y="708" width="44" height="1" fill="#9a9a9a"/>
<rect x="1167" y="708" width="44" height="1" fill="#9a9a9a"/>
<rect x="1212" y="708" width="44" height="1" fill="#9a9a9a"/>
<rect x="1258" y="708" width="44" height="1" fill="#9a9a9a"/>
<rect x="1303" y="708" width="44" height="1" fill="#9a9a9a"/>
<rect x="1348" y="708" width="44" height="1" fill="#9a9a9a"/>
</svg>
<div style="position:absolute;left:846px;top:37px;width:542px;height:440px;overflow:hidden;clip-path:polygon(112.25px 437.64px,110.17px 437.63px,109.69px 437.46px,109.42px 437.33px,109.12px 437.16px,108.82px 436.98px,108.51px 436.79px,108.17px 436.56px,107.77px 436.30px,107.33px 435.99px,106.85px 435.65px,106.34px 435.28px,105.81px 434.88px,105.23px 434.45px,104.59px 433.99px,103.90px 433.50px,103.11px 432.94px,102.23px 432.33px,101.25px 431.65px,100.20px 430.91px,99.08px 430.11px,97.87px 429.25px,96.56px 428.28px,95.15px 427.19px,93.63px 425.98px,92.00px 424.58px,90.29px 423.07px,88.47px 421.35px,86.44px 419.19px,84.18px 416.56px,81.70px 413.48px,79.01px 409.76px,76.11px 405.44px,72.99px 400.48px,69.60px 394.53px,65.93px 387.60px,62.00px 379.69px,57.75px 370.49px,53.10px 360.00px,48.14px 348.22px,43.13px 334.90px,38.10px 319.93px,33.03px 303.43px,28.06px 285.57px,23.11px 266.11px,18.27px 245.30px,13.90px 224.01px,10.02px 202.23px,6.61px 179.98px,4.00px 158.27px,2.20px 137.20px,1.20px 116.67px,1.22px 97.34px,2.33px 79.21px,4.48px 62.30px,7.71px 47.31px,12.16px 34.37px,17.70px 23.38px,24.04px 14.69px,31.21px 8.64px,39.15px 4.97px,47.40px 3.05px,55.93px 2.98px,64.73px 4.65px,73.51px 7.05px,82.30px 10.03px,91.13px 13.75px,99.78px 17.69px,108.17px 21.72px,116.39px 25.98px,124.50px 30.42px,132.51px 35.01px,140.40px 39.78px,148.25px 44.70px,156.09px 49.79px,163.89px 55.04px,171.66px 60.40px,179.40px 65.87px,187.11px 71.46px,194.81px 77.13px,202.50px 82.88px,210.19px 88.71px,217.88px 94.59px,225.59px 100.54px,233.31px 106.54px,241.02px 112.57px,248.70px 118.63px,256.37px 124.72px,264.02px 130.81px,271.67px 136.89px,279.30px 142.98px,286.89px 149.04px,294.42px 155.09px,301.90px 161.11px,309.31px 167.07px,316.65px 172.99px,323.91px 178.85px,331.08px 184.63px,338.14px 190.33px,345.11px 195.95px,351.94px 201.45px,358.64px 206.84px,365.21px 212.11px,371.58px 217.23px,377.76px 222.23px,383.75px 227.07px,389.48px 231.71px,394.91px 236.09px,400.08px 240.25px,405.04px 244.25px,409.83px 248.10px,414.42px 251.79px,418.74px 255.27px,422.78px 258.50px,426.56px 261.52px,430.11px 264.36px,433.42px 267.03px,436.49px 269.52px,439.35px 271.84px,442.00px 273.98px,444.44px 275.95px,446.71px 277.79px,448.82px 279.48px,450.77px 281.04px,452.59px 282.49px,454.28px 283.85px,455.84px 285.12px,457.31px 286.31px,458.70px 287.44px,460.01px 288.50px,461.25px 289.50px,462.40px 290.43px,463.47px 291.30px,464.47px 292.10px,465.40px 292.84px,466.26px 293.52px,467.06px 294.14px,467.77px 294.72px,468.41px 295.24px,469.00px 295.71px,469.54px 296.15px,470.04px 296.55px,470.48px 296.91px,470.87px 297.23px,471.22px 297.51px,471.58px 297.80px,472.01px 298.15px,472.47px 298.52px,472.88px 298.85px,473.21px 299.12px,473.50px 299.35px,473.78px 299.58px,474.10px 299.83px,474.40px 300.08px,474.40px 301.63px);">
<div style="position:absolute;left:0;top:0;width:542px;height:440px;background:#009900;clip-path:polygon(193.72px 127.44px,3973.45px -10878.92px,-8374.16px -5375.93px)"></div>
<div style="position:absolute;left:0;top:0;width:542px;height:440px;background:#990000;clip-path:polygon(411.44px 267.07px,8979.32px 5770.44px,12759.05px -5235.92px)"></div>
<div style="position:absolute;left:0;top:0;width:542px;height:440px;background:#000099;clip-path:polygon(97.45px 407.08px,-12250.16px 5910.07px,-3682.28px 11413.44px)"></div>
<div style="position:absolute;left:0;top:0;width:542px;height:440px;background:conic-gradient(from -1.0458deg at 96.40px 408.15px,#009900 20.000deg,#0c9900 21.959deg,#189900 23.919deg,#269900 25.878deg,#359900 27.837deg,#459900 29.797deg,#569900 31.756deg,#699900 33.715deg,#7e9900 35.675deg,#969900 37.634deg,#998400 39.593deg,#997100 41.553deg,#996000 43.512deg,#995200 45.471deg,#994600 47.431deg,#993b00 49.390deg,#993200 51.350deg,#992900 53.309deg,#992200 55.268deg,#991b00 57.228deg,#991500 59.187deg,#990f00 61.146deg,#990a00 63.106deg,#990500 65.065deg,#990000 67.024deg);clip-path:polygon(410.66px 268.09px,192.49px 128.36px,3972.40px -10877.85px,12758.00px -5234.85px)"></div>
<div style="position:absolute;left:0;top:0;width:542px;height:440px;background:conic-gradient(from 225.9785deg at 412.94px 267.07px,#000099 20.000deg,#000a99 22.364deg,#001599 24.728deg,#002199 27.092deg,#002e99 29.456deg,#003b99 31.820deg,#004a99 34.184deg,#005a99 36.547deg,#006c99 38.911deg,#008099 41.275deg,#009799 43.639deg,#009985 46.003deg,#009972 48.367deg,#009962 50.731deg,#009954 53.095deg,#009947 55.459deg,#00993c 57.823deg,#009932 60.187deg,#009929 62.551deg,#009921 64.915deg,#00991a 67.278deg,#009913 69.642deg,#00990c 72.006deg,#009906 74.370deg,#009900 76.734deg);clip-path:polygon(195.40px 127.35px,98.68px 407.13px,-12248.66px 5910.07px,-8372.66px -5375.93px)"></div>
<div style="position:absolute;left:0;top:0;width:542px;height:440px;background:conic-gradient(from 102.7127deg at 193.30px 126.00px,#990000 20.000deg,#990004 23.177deg,#990008 26.353deg,#99000d 29.530deg,#990012 32.707deg,#990017 35.884deg,#99001c 39.060deg,#990022 42.237deg,#990028 45.414deg,#99002e 48.591deg,#990036 51.767deg,#99003e 54.944deg,#990048 58.121deg,#990053 61.298deg,#99005f 64.474deg,#99006f 67.651deg,#990082 70.828deg,#990099 74.004deg,#7f0099 77.181deg,#670099 80.358deg,#500099 83.535deg,#3b0099 86.711deg,#260099 89.888deg,#130099 93.065deg,#000099 96.242deg);clip-path:polygon(97.21px 405.79px,410.84px 265.72px,8978.90px 5769.00px,-3682.70px 11412.00px)"></div>
<div style="position:absolute;left:0;top:0;width:542px;height:440px;clip-path:polygon(412.94px 267.07px,193.30px 126.00px,96.40px 408.15px)">
<div style="position:absolute;left:0;top:0;width:542px;height:440px;background:conic-gradient(from 102.7127deg at 193.30px 126.00px,#000000 20.000deg,#000005 22.249deg,#00000a 24.498deg,#00000f 26.746deg,#000014 28.995deg,#00001a 31.244deg,#00001f 33.493deg,#000025 35.742deg,#00002b 37.990deg,#000032 40.239deg,#000039 42.488deg,#000040 44.737deg,#000048 46.986deg,#000050 49.234deg,#000059 51.483deg,#000062 53.732deg,#00006d 55.981deg,#000078 58.230deg,#000085 60.478deg,#000093 62.727deg,#0000a3 64.976deg,#0000b5 67.225deg,#0000ca 69.474deg,#0000e2 71.722deg,#0000ff 73.971deg),conic-gradient(from 16.7889deg at 96.40px 408.15px,#ffff00 20.000deg,#ffe600 21.216deg,#ffd000 22.432deg,#ffbd00 23.649deg,#ffab00 24.865deg,#ff9b00 26.081deg,#ff8d00 27.297deg,#ff7f00 28.514deg,#ff7300 29.730deg,#ff6800 30.946deg,#ff5e00 32.162deg,#ff5400 33.379deg,#ff4b00 34.595deg,#ff4300 35.811deg,#ff3b00 37.027deg,#ff3400 38.244deg,#ff2d00 39.460deg,#ff2600 40.676deg,#ff2000 41.892deg,#ff1a00 43.108deg,#ff1400 44.325deg,#ff0f00 45.541deg,#ff0a00 46.757deg,#ff0500 47.973deg,#ff0000 49.190deg);background-blend-mode:screen;clip-path:polygon(413.64px 267.07px,270.35px 174.80px,200.80px 267.60px,206.39px 359.52px)"></div>
<div style="position:absolute;left:0;top:0;width:542px;height:440px;background:conic-gradient(from -1.0458deg at 96.40px 408.15px,#000000 20.000deg,#070000 20.743deg,#0f0000 21.486deg,#160000 22.229deg,#1e0000 22.972deg,#260000 23.716deg,#2f0000 24.459deg,#370000 25.202deg,#400000 25.945deg,#490000 26.688deg,#520000 27.431deg,#5c0000 28.174deg,#660000 28.917deg,#700000 29.660deg,#7b0000 30.404deg,#860000 31.147deg,#910000 31.890deg,#9d0000 32.633deg,#aa0000 33.376deg,#b60000 34.119deg,#c40000 34.862deg,#d20000 35.605deg,#e00000 36.348deg,#ef0000 37.092deg,#ff0000 37.835deg),conic-gradient(from 249.8584deg at 412.94px 267.07px,#00ffff 20.000deg,#00ffe9 21.369deg,#00ffd5 22.738deg,#00ffc3 24.107deg,#00ffb3 25.476deg,#00ffa3 26.845deg,#00ff95 28.214deg,#00ff88 29.582deg,#00ff7c 30.951deg,#00ff71 32.320deg,#00ff66 33.689deg,#00ff5d 35.058deg,#00ff53 36.427deg,#00ff4a 37.796deg,#00ff42 39.165deg,#00ff3a 40.534deg,#00ff32 41.903deg,#00ff2b 43.272deg,#00ff24 44.641deg,#00ff1e 46.010deg,#00ff17 47.379deg,#00ff11 48.747deg,#00ff0b 50.116deg,#00ff06 51.485deg,#00ff00 52.854deg);background-blend-mode:screen;clip-path:polygon(193.22px 125.30px,144.13px 268.24px,201.49px 268.30px,271.00px 175.19px)"></div>
<div style="position:absolute;left:0;top:0;width:542px;height:440px;background:conic-gradient(from 225.9785deg at 412.94px 267.07px,#000000 20.000deg,#000700 20.995deg,#000f00 21.990deg,#001600 22.985deg,#001e00 23.980deg,#002600 24.975deg,#002e00 25.970deg,#003600 26.965deg,#003f00 27.960deg,#004800 28.955deg,#005100 29.950deg,#005a00 30.945deg,#006400 31.940deg,#006e00 32.935deg,#007900 33.930deg,#008400 34.925deg,#008f00 35.920deg,#009b00 36.915deg,#00a800 37.910deg,#00b400 38.905deg,#00c200 39.900deg,#00d000 40.895deg,#00df00 41.890deg,#00ef00 42.885deg,#00ff00 43.880deg),conic-gradient(from 156.6840deg at 193.30px 126.00px,#ff00ff 20.000deg,#f200ff 20.928deg,#e500ff 21.856deg,#d900ff 22.784deg,#cd00ff 23.712deg,#c100ff 24.640deg,#b500ff 25.568deg,#aa00ff 26.495deg,#9f00ff 27.423deg,#9400ff 28.351deg,#8900ff 29.279deg,#7e00ff 30.207deg,#7400ff 31.135deg,#6900ff 32.063deg,#5f00ff 32.991deg,#5500ff 33.919deg,#4b00ff 34.847deg,#4200ff 35.775deg,#3800ff 36.703deg,#2e00ff 37.631deg,#2500ff 38.559deg,#1c00ff 39.486deg,#1200ff 40.414deg,#0900ff 41.342deg,#0000ff 42.270deg);background-blend-mode:screen;clip-path:polygon(95.96px 408.70px,207.36px 359.37px,201.90px 267.02px,144.42px 267.07px)"></div>
</div>
</div>
<div style="position:absolute;left:1234px;top:37px;width:155px;height:161px;overflow:hidden;">
<div style="position:absolute;left:0;top:0;width:155px;height:161px;background:#009900;clip-path:polygon(-292.00px -221.58px,17843.58px -67616.23px,-41399.83px -33919.04px)"></div>
<div style="position:absolute;left:0;top:0;width:155px;height:161px;background:#990000;clip-path:polygon(760.17px 640.96px,41868.00px 34338.42px,60003.58px -33056.23px)"></div>
<div style="position:absolute;left:0;top:0;width:155px;height:161px;background:#000099;clip-path:polygon(-756.42px 1503.77px,-59999.83px 35200.96px,-18892.00px 68898.42px)"></div>
<div style="position:absolute;left:0;top:0;width:155px;height:161px;background:conic-gradient(from -4.9386deg at -757.33px 1504.96px,#009900 20.000deg,#0e9900 21.888deg,#1d9900 23.776deg,#2d9900 25.663deg,#3e9900 27.551deg,#519900 29.439deg,#669900 31.327deg,#7d9900 33.215deg,#969900 35.103deg,#998300 36.990deg,#996f00 38.878deg,#995f00 40.766deg,#995100 42.654deg,#994500 44.542deg,#993b00 46.429deg,#993200 48.317deg,#992a00 50.205deg,#992300 52.093deg,#991c00 53.981deg,#991700 55.869deg,#991100 57.756deg,#990c00 59.644deg,#990800 61.532deg,#990400 63.420deg,#990000 65.308deg);clip-path:polygon(759.50px 642.20px,-292.98px -220.63px,17842.67px -67615.04px,60002.67px -33055.04px)"></div>
<div style="position:absolute;left:0;top:0;width:155px;height:161px;background:conic-gradient(from 220.3690deg at 761.67px 640.96px,#000099 20.000deg,#000b99 22.874deg,#001699 25.748deg,#002299 28.622deg,#002f99 31.496deg,#003c99 34.370deg,#004b99 37.243deg,#005a99 40.117deg,#006c99 42.991deg,#007e99 45.865deg,#009399 48.739deg,#009989 51.613deg,#009976 54.487deg,#009966 57.361deg,#009958 60.235deg,#00994b 63.109deg,#009940 65.982deg,#009936 68.856deg,#00992d 71.730deg,#009924 74.604deg,#00991c 77.478deg,#009914 80.352deg,#00990d 83.226deg,#009906 86.100deg,#009900 88.974deg);clip-path:polygon(-290.40px -221.46px,-755.16px 1503.72px,-59998.33px 35200.96px,-41398.33px -33919.04px)"></div>
<div style="position:absolute;left:0;top:0;width:155px;height:161px;background:conic-gradient(from 109.3427deg at -292.33px -223.04px,#990000 20.000deg,#990003 22.738deg,#990007 25.477deg,#99000b 28.215deg,#99000f 30.953deg,#990013 33.691deg,#990017 36.430deg,#99001c 39.168deg,#990022 41.906deg,#990028 44.645deg,#99002e 47.383deg,#990036 50.121deg,#99003e 52.859deg,#990048 55.598deg,#990054 58.336deg,#990062 61.074deg,#990074 63.812deg,#99008a 66.551deg,#8c0099 69.289deg,#710099 72.027deg,#570099 74.766deg,#400099 77.504deg,#290099 80.242deg,#140099 82.980deg,#000099 85.719deg);clip-path:polygon(-756.68px 1502.55px,759.74px 639.38px,41867.67px 34336.96px,-18892.33px 68896.96px)"></div>
<div style="position:absolute;left:0;top:0;width:155px;height:161px;clip-path:polygon(761.67px 640.96px,-292.33px -223.04px,-757.33px 1504.96px)">
<div style="position:absolute;left:0;top:0;width:155px;height:161px;background:conic-gradient(from 109.3427deg at -292.33px -223.04px,#000000 20.000deg,#000004 22.002deg,#000008 24.005deg,#00000d 26.007deg,#000011 28.010deg,#000016 30.012deg,#00001b 32.014deg,#000020 34.017deg,#000026 36.019deg,#00002c 38.022deg,#000032 40.024deg,#000038 42.027deg,#000040 44.029deg,#000048 46.031deg,#000050 48.034deg,#000059 50.036deg,#000064 52.039deg,#00006f 54.041deg,#00007c 56.043deg,#00008a 58.046deg,#00009b 60.048deg,#0000ae 62.051deg,#0000c4 64.053deg,#0000df 66.056deg,#0000ff 68.058deg),conic-gradient(from 10.3674deg at -757.33px 1504.96px,#ffff00 20.000deg,#ffe300 21.250deg,#ffcb00 22.500deg,#ffb600 23.750deg,#ffa400 25.000deg,#ff9400 26.250deg,#ff8500 27.500deg,#ff7800 28.750deg,#ff6c00 30.001deg,#ff6100 31.251deg,#ff5700 32.501deg,#ff4e00 33.751deg,#ff4500 35.001deg,#ff3d00 36.251deg,#ff3600 37.501deg,#ff2f00 38.751deg,#ff2800 40.001deg,#ff2200 41.251deg,#ff1d00 42.501deg,#ff1700 43.751deg,#ff1200 45.001deg,#ff0d00 46.251deg,#ff0900 47.501deg,#ff0400 48.752deg,#ff0000 50.002deg);background-blend-mode:screen;clip-path:polygon(762.37px 640.96px,77.50px 79.44px,-253.66px 644.16px,-227.91px 1204.24px)"></div>
<div style="position:absolute;left:0;top:0;width:155px;height:161px;background:conic-gradient(from -4.9386deg at -757.33px 1504.96px,#000000 20.000deg,#080000 20.638deg,#0f0000 21.276deg,#170000 21.913deg,#200000 22.551deg,#280000 23.189deg,#310000 23.827deg,#390000 24.464deg,#430000 25.102deg,#4c0000 25.740deg,#550000 26.378deg,#5f0000 27.015deg,#690000 27.653deg,#740000 28.291deg,#7e0000 28.929deg,#890000 29.566deg,#950000 30.204deg,#a10000 30.842deg,#ad0000 31.480deg,#b90000 32.117deg,#c60000 32.755deg,#d40000 33.393deg,#e20000 34.031deg,#f00000 34.668deg,#ff0000 35.306deg),conic-gradient(from 249.8193deg at 761.67px 640.96px,#00ffff 20.000deg,#00ffea 21.647deg,#00ffd7 23.294deg,#00ffc6 24.940deg,#00ffb6 26.587deg,#00ffa7 28.234deg,#00ff9a 29.881deg,#00ff8d 31.528deg,#00ff81 33.174deg,#00ff76 34.821deg,#00ff6b 36.468deg,#00ff61 38.115deg,#00ff58 39.762deg,#00ff4f 41.408deg,#00ff46 43.055deg,#00ff3e 44.702deg,#00ff36 46.349deg,#00ff2f 47.996deg,#00ff27 49.643deg,#00ff20 51.289deg,#00ff1a 52.936deg,#00ff13 54.583deg,#00ff0c 56.230deg,#00ff06 57.877deg,#00ff00 59.523deg);background-blend-mode:screen;clip-path:polygon(-292.39px -223.74px,-526.35px 645.57px,-252.97px 644.86px,78.11px 79.76px)"></div>
<div style="position:absolute;left:0;top:0;width:155px;height:161px;background:conic-gradient(from 220.3690deg at 761.67px 640.96px,#000000 20.000deg,#000800 21.227deg,#000f00 22.454deg,#001700 23.681deg,#001f00 24.908deg,#002800 26.135deg,#003000 27.363deg,#003900 28.590deg,#004200 29.817deg,#004b00 31.044deg,#005400 32.271deg,#005d00 33.498deg,#006700 34.725deg,#007200 35.952deg,#007c00 37.179deg,#008700 38.406deg,#009200 39.634deg,#009e00 40.861deg,#00aa00 42.088deg,#00b700 43.315deg,#00c400 44.542deg,#00d200 45.769deg,#00e000 46.996deg,#00ef00 48.223deg,#00ff00 49.450deg),conic-gradient(from 157.4006deg at -292.33px -223.04px,#ff00ff 20.000deg,#f200ff 20.736deg,#e500ff 21.472deg,#d900ff 22.208deg,#cc00ff 22.943deg,#c000ff 23.679deg,#b500ff 24.415deg,#a900ff 25.151deg,#9e00ff 25.887deg,#9300ff 26.623deg,#8800ff 27.359deg,#7d00ff 28.095deg,#7300ff 28.830deg,#6800ff 29.566deg,#5e00ff 30.302deg,#5400ff 31.038deg,#4a00ff 31.774deg,#4000ff 32.510deg,#3700ff 33.246deg,#2d00ff 33.981deg,#2400ff 34.717deg,#1b00ff 35.453deg,#1200ff 36.189deg,#0900ff 36.925deg,#0000ff 37.661deg);background-blend-mode:screen;clip-path:polygon(-757.70px 1505.55px,-227.05px 1204.11px,-252.63px 643.54px,-526.09px 644.34px)"></div>
</div>
</div>
<svg width="1398" height="709" viewBox="0 0 1398 709">
<rect x="1032.5" y="156.5" width="12" height="12" fill="none" stroke="#fff" stroke-width="1" shape-rendering="crispEdges"/>
<rect x="1034.5" y="186.5" width="12" height="12" fill="none" stroke="#fff" stroke-width="1" shape-rendering="crispEdges"/>
<rect x="1035.5" y="214.5" width="12" height="12" fill="none" stroke="#fff" stroke-width="1" shape-rendering="crispEdges"/>
<rect x="1038.5" y="241.5" width="12" height="12" fill="none" stroke="#fff" stroke-width="1" shape-rendering="crispEdges"/>
<rect x="1038.5" y="269.5" width="12" height="12" fill="none" stroke="#fff" stroke-width="1" shape-rendering="crispEdges"/>
<rect x="1109.5" y="205.5" width="12" height="12" fill="none" stroke="#fff" stroke-width="1" shape-rendering="crispEdges"/>
<rect x="1094.5" y="224.5" width="12" height="12" fill="none" stroke="#fff" stroke-width="1" shape-rendering="crispEdges"/>
<rect x="1082.5" y="241.5" width="12" height="12" fill="none" stroke="#fff" stroke-width="1" shape-rendering="crispEdges"/>
<rect x="1068.5" y="260.5" width="12" height="12" fill="none" stroke="#fff" stroke-width="1" shape-rendering="crispEdges"/>
<rect x="1054.5" y="279.5" width="12" height="12" fill="none" stroke="#fff" stroke-width="1" shape-rendering="crispEdges"/>
<rect x="983.5" y="298.5" width="12" height="12" fill="none" stroke="#fff" stroke-width="1" shape-rendering="crispEdges"/>
<rect x="995.5" y="298.5" width="12" height="12" fill="none" stroke="#fff" stroke-width="1" shape-rendering="crispEdges"/>
<rect x="1006.5" y="298.5" width="12" height="12" fill="none" stroke="#fff" stroke-width="1" shape-rendering="crispEdges"/>
<rect x="1018.5" y="298.5" width="12" height="12" fill="none" stroke="#fff" stroke-width="1" shape-rendering="crispEdges"/>
<rect x="1029.5" y="298.5" width="12" height="12" fill="none" stroke="#fff" stroke-width="1" shape-rendering="crispEdges"/>
<rect x="1082.5" y="298.5" width="12" height="12" fill="none" stroke="#fff" stroke-width="1" shape-rendering="crispEdges"/>
<rect x="1125.5" y="296.5" width="12" height="12" fill="none" stroke="#fff" stroke-width="1" shape-rendering="crispEdges"/>
<rect x="1164.5" y="296.5" width="12" height="12" fill="none" stroke="#fff" stroke-width="1" shape-rendering="crispEdges"/>
<rect x="1204.5" y="296.5" width="12" height="12" fill="none" stroke="#fff" stroke-width="1" shape-rendering="crispEdges"/>
<rect x="1252.5" y="296.5" width="12" height="12" fill="none" stroke="#fff" stroke-width="1" shape-rendering="crispEdges"/>
<rect x="1019.5" y="326.5" width="12" height="12" fill="none" stroke="#fff" stroke-width="1" shape-rendering="crispEdges"/>
<rect x="998.5" y="353.5" width="12" height="12" fill="none" stroke="#fff" stroke-width="1" shape-rendering="crispEdges"/>
<rect x="978.5" y="380.5" width="12" height="12" fill="none" stroke="#fff" stroke-width="1" shape-rendering="crispEdges"/>
<rect x="958.5" y="407.5" width="12" height="12" fill="none" stroke="#fff" stroke-width="1" shape-rendering="crispEdges"/>
<rect x="935.5" y="438.5" width="12" height="12" fill="none" stroke="#fff" stroke-width="1" shape-rendering="crispEdges"/>
<rect x="1042.5" y="315.5" width="12" height="12" fill="none" stroke="#fff" stroke-width="1" shape-rendering="crispEdges"/>
<rect x="1043.5" y="334.5" width="12" height="12" fill="none" stroke="#fff" stroke-width="1" shape-rendering="crispEdges"/>
<rect x="1043.5" y="351.5" width="12" height="12" fill="none" stroke="#fff" stroke-width="1" shape-rendering="crispEdges"/>
<rect x="1044.5" y="370.5" width="12" height="12" fill="none" stroke="#fff" stroke-width="1" shape-rendering="crispEdges"/>
<rect x="1045.5" y="389.5" width="12" height="12" fill="none" stroke="#fff" stroke-width="1" shape-rendering="crispEdges"/>
<rect x="1041.5" y="298.5" width="12" height="12" fill="none" stroke="#000" stroke-width="1" shape-rendering="crispEdges"/>
<circle cx="1045" cy="159" r="3.5" fill="#00bc00" stroke="#000" stroke-width="1"/>
<circle cx="1037" cy="200.8" r="3.5" fill="#3fbc3f" stroke="#000" stroke-width="1"/>
<circle cx="1029.8" cy="237.8" r="3.5" fill="#5cbc5c" stroke="#000" stroke-width="1"/>
<circle cx="1026" cy="269.8" r="3.5" fill="#78bc78" stroke="#000" stroke-width="1"/>
<circle cx="1020.8" cy="303" r="3.5" fill="#96bc96" stroke="#000" stroke-width="1"/>
<circle cx="1111.8" cy="210.8" r="3.5" fill="#bcbc00" stroke="#000" stroke-width="1"/>
<circle cx="1089.8" cy="238.6" r="3.5" fill="#bcbc4b" stroke="#000" stroke-width="1"/>
<circle cx="1071" cy="263.8" r="3.5" fill="#bcbc6b" stroke="#000" stroke-width="1"/>
<circle cx="1053.6" cy="286" r="3.5" fill="#bcbc86" stroke="#000" stroke-width="1"/>
<circle cx="1034.8" cy="310.6" r="3.5" fill="#bcbca1" stroke="#000" stroke-width="1"/>
<circle cx="979.8" cy="336" r="3.5" fill="#00bcbc" stroke="#000" stroke-width="1"/>
<circle cx="985" cy="335.6" r="3.5" fill="#53bcbc" stroke="#000" stroke-width="1"/>
<circle cx="989.8" cy="334.6" r="3.5" fill="#74bcbc" stroke="#000" stroke-width="1"/>
<circle cx="997.8" cy="333.2" r="3.5" fill="#8ebcbc" stroke="#000" stroke-width="1"/>
<circle cx="1007" cy="332.2" r="3.5" fill="#a6bcbc" stroke="#000" stroke-width="1"/>
<circle cx="1054.6" cy="331" r="3.5" fill="#bc8484" stroke="#000" stroke-width="1"/>
<circle cx="1094.6" cy="325" r="3.5" fill="#bc6363" stroke="#000" stroke-width="1"/>
<circle cx="1132.6" cy="319.4" r="3.5" fill="#bc4949" stroke="#000" stroke-width="1"/>
<circle cx="1177" cy="310" r="3.5" fill="#bc3030" stroke="#000" stroke-width="1"/>
<circle cx="1223" cy="300.5" r="3.5" fill="#bc0000" stroke="#000" stroke-width="1"/>
<circle cx="993.8" cy="363" r="3.5" fill="#9696bc" stroke="#000" stroke-width="1"/>
<circle cx="975.4" cy="387" r="3.5" fill="#7878bc" stroke="#000" stroke-width="1"/>
<circle cx="964" cy="402.8" r="3.5" fill="#5c5cbc" stroke="#000" stroke-width="1"/>
<circle cx="954" cy="417.4" r="3.5" fill="#3f3fbc" stroke="#000" stroke-width="1"/>
<circle cx="944.8" cy="427.8" r="3.5" fill="#0000bc" stroke="#000" stroke-width="1"/>
<circle cx="1014.8" cy="350.6" r="3.5" fill="#bca1bc" stroke="#000" stroke-width="1"/>
<circle cx="1011.8" cy="367.8" r="3.5" fill="#bc86bc" stroke="#000" stroke-width="1"/>
<circle cx="1010.8" cy="380" r="3.5" fill="#bc6bbc" stroke="#000" stroke-width="1"/>
<circle cx="1008.6" cy="389.8" r="3.5" fill="#bc4bbc" stroke="#000" stroke-width="1"/>
<circle cx="1005.8" cy="399.7" r="3.5" fill="#bc00bc" stroke="#000" stroke-width="1"/>
<circle cx="1040.8" cy="304" r="3.5" fill="#fff" stroke="#000" stroke-width="1"/>
<rect x="1234.5" y="37.5" width="154" height="160" fill="none" stroke="#9a9a9a" stroke-width="1"/>
<rect x="1305.5" y="111.5" width="10" height="10" fill="none" stroke="#fff" stroke-width="1" shape-rendering="crispEdges"/>
<circle cx="1293.6" cy="109.4" r="3.4" fill="#c0b810" stroke="#000" stroke-width="1"/>
</svg>
</div></body></html>
